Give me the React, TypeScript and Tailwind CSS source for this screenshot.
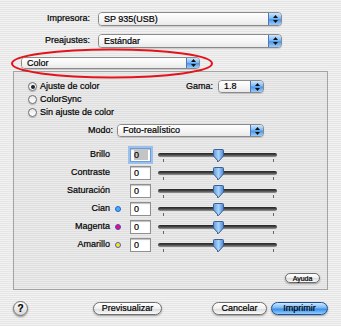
import React from 'react';

const stripes =
  'bg-[repeating-linear-gradient(180deg,#f2f2f2_0px,#f2f2f2_1px,#e5e5e5_1px,#e5e5e5_2px)]';

const Arrows = () => (
  <svg width="5" height="8" viewBox="0 0 5 8">
    <polygon points="2.5,0 5,3 0,3" fill="#111" />
    <polygon points="0,5 5,5 2.5,8" fill="#111" />
  </svg>
);

function Popup({ text, className }: { text: string; className: string }) {
  return (
    <div
      className={`flex overflow-hidden rounded-[4px] border border-[#8a8a8a] shadow-[0_1px_1px_rgba(0,0,0,0.15)] ${className}`}
    >
      <div className="flex flex-1 items-center bg-[linear-gradient(#ffffff,#f4f4f4_60%,#e9e9e9)] pl-[5px] leading-none">
        {text}
      </div>
      <div className="flex w-[13px] items-center justify-center border-l border-[#4f79b4] bg-[linear-gradient(#cfe6fc,#7dbaf4_45%,#4c97ea_55%,#9ccdfa)]">
        <Arrows />
      </div>
    </div>
  );
}

function Radio({ checked, label }: { checked?: boolean; label: string }) {
  return (
    <div className="flex h-[13px] items-center gap-[3px]">
      <div className="flex h-[9px] w-[9px] items-center justify-center rounded-full border border-[#6f6f6f] bg-[linear-gradient(#e8e8e8,#ffffff)] shadow-[0_1px_1px_rgba(0,0,0,0.2)]">
        {checked && <div className="h-[4px] w-[4px] rounded-full bg-[#1b2530]" />}
      </div>
      <span>{label}</span>
    </div>
  );
}

function Button({ text, className, primary }: { text: string; className: string; primary?: boolean }) {
  return (
    <div
      className={`flex items-center justify-center rounded-full border leading-none shadow-[0_1px_2px_rgba(0,0,0,0.35)] ${
        primary
          ? 'border-[#1d4f96] bg-[linear-gradient(#cfe7ff,#76b6f5_45%,#3d8de8_55%,#8fd0ff)]'
          : 'border-[#6d6d6d] bg-[linear-gradient(#ffffff,#f0f0f0_50%,#dcdcdc_55%,#fbfbfb)]'
      } ${className}`}
    >
      {text}
    </div>
  );
}

function Slider() {
  return (
    <div className="relative h-[18px] w-[119px]">
      <div className="absolute left-0 right-0 top-[7px] h-[4px] rounded-full bg-[linear-gradient(#222,#4a4a4a_50%,#9a9a9a)]" />
      <div className="absolute top-[13px] left-[5px] h-[3px] w-px bg-[#666]" />
      <div className="absolute top-[13px] left-[59px] h-[3px] w-px bg-[#666]" />
      <div className="absolute top-[13px] left-[115px] h-[3px] w-px bg-[#666]" />
      <svg className="absolute left-[55px] top-[3px]" width="11" height="13" viewBox="0 0 11 13">
        <defs>
          <linearGradient id="th" x1="0" y1="0" x2="1" y2="0">
            <stop offset="0" stopColor="#5f9be0" />
            <stop offset="0.5" stopColor="#a9d3fb" />
            <stop offset="1" stopColor="#4a86d6" />
          </linearGradient>
        </defs>
        <path d="M1.5 0.5 H9.5 Q10.5 0.5 10.5 1.5 V7 L5.5 12.5 L0.5 7 V1.5 Q0.5 0.5 1.5 0.5 Z" fill="url(#th)" stroke="#3d5f8f" strokeWidth="1" />
      </svg>
    </div>
  );
}

function Field({ focused }: { focused?: boolean }) {
  return (
    <div
      className={`flex h-[14px] w-[21px] items-center border bg-white pl-[3px] leading-none shadow-[inset_0_1px_1px_rgba(0,0,0,0.25)] ${
        focused ? 'border-[#6c9bd9] ring-2 ring-[#9cc0ee]' : 'border-[#8f8f8f]'
      }`}
    >
      {focused ? <span className="flex h-[10px] w-[14px] items-center bg-[#c4c4c4]">0</span> : '0'}
    </div>
  );
}

const Dot = ({ cls }: { cls: string }) => (
  <div className={`h-[6px] w-[6px] rounded-full border ${cls}`} />
);

const rows: { label: string; dot?: string; focused?: boolean }[] = [
  { label: 'Brillo', focused: true },
  { label: 'Contraste' },
  { label: 'Saturación' },
  { label: 'Cian', dot: 'bg-[#3fb2ff] border-[#2762c8]' },
  { label: 'Magenta', dot: 'bg-[#e0127a] border-[#5b3fc7]' },
  { label: 'Amarillo', dot: 'bg-[#f4f000] border-[#5a55d0]' },
];

export default function App() {
  return (
    <div
      className={`relative h-[326px] w-[341px] overflow-hidden text-[9px] text-black [-webkit-text-stroke:0.2px_#000] ${stripes}`}
      style={{ fontFamily: '"Liberation Sans", Arial, sans-serif' }}
    >
      <div className="grid grid-cols-[90px_184px] items-center gap-x-[8px] gap-y-[8px] pt-[12px]">
        <span className="text-right">Impresora:</span>
        <Popup text="SP 935(USB)" className="h-[14px]" />
        <span className="text-right">Preajustes:</span>
        <Popup text="Estándar" className="h-[14px]" />
      </div>

      <Popup text="Color" className="ml-[21px] mt-[9px] h-[12px] w-[179px]" />

      <div className="mx-[13px] mt-[2px] flex h-[219px] flex-col border border-[#a3a3a3] bg-[repeating-linear-gradient(180deg,#ebebeb_0px,#ebebeb_1px,#dfdfdf_1px,#dfdfdf_2px)] pl-[14px] pt-[8px]">
        <div className="flex justify-between pr-[63px]">
          <div className="flex flex-col">
            <Radio checked label="Ajuste de color" />
            <Radio label="ColorSync" />
            <Radio label="Sin ajuste de color" />
          </div>
          <div className="flex h-[13px] items-center gap-[5px]">
            <span>Gama:</span>
            <Popup text="1.8" className="h-[13px] w-[46px]" />
          </div>
        </div>

        <div className="mt-[5px] flex h-[13px] items-center justify-end gap-[4px] pr-[63px]">
          <span>Modo:</span>
          <Popup text="Foto-realístico" className="h-[13px] w-[147px]" />
        </div>

        <div className="mt-[9px] flex flex-col">
          {rows.map((r) => (
            <div key={r.label} className="flex h-[18px] items-center">
              <span className="w-[82px] text-right">{r.label}</span>
              <div className="flex w-[20px] items-center pl-[5px]">{r.dot && <Dot cls={r.dot} />}</div>
              <Field focused={r.focused} />
              <div className="ml-[7px]">
                <Slider />
              </div>
            </div>
          ))}
        </div>

        <div className="mt-[19px] flex justify-end pr-[7px]">
          <Button text="Ayuda" className="h-[10px] w-[35px] text-[7px]" />
        </div>
      </div>

      <div className="mt-[11px] flex items-center pl-[13px]">
        <div className="flex h-[15px] w-[15px] items-center justify-center rounded-full border border-[#6f6f6f] bg-[linear-gradient(#ffffff,#d6d6d6)] text-[10px] font-bold leading-none shadow-[0_1px_2px_rgba(0,0,0,0.4)]">
          ?
        </div>
        <Button text="Previsualizar" className="ml-[65px] h-[13px] w-[69px]" />
        <Button text="Cancelar" className="ml-[50px] h-[13px] w-[55px]" />
        <Button text="Imprimir" primary className="ml-[4px] h-[13px] w-[57px]" />
      </div>

      <svg className="pointer-events-none absolute left-0 top-0" width="341" height="326">
        <ellipse cx="112" cy="63.5" rx="100" ry="14" fill="none" stroke="#e3141c" strokeWidth="2" />
      </svg>
    </div>
  );
}
